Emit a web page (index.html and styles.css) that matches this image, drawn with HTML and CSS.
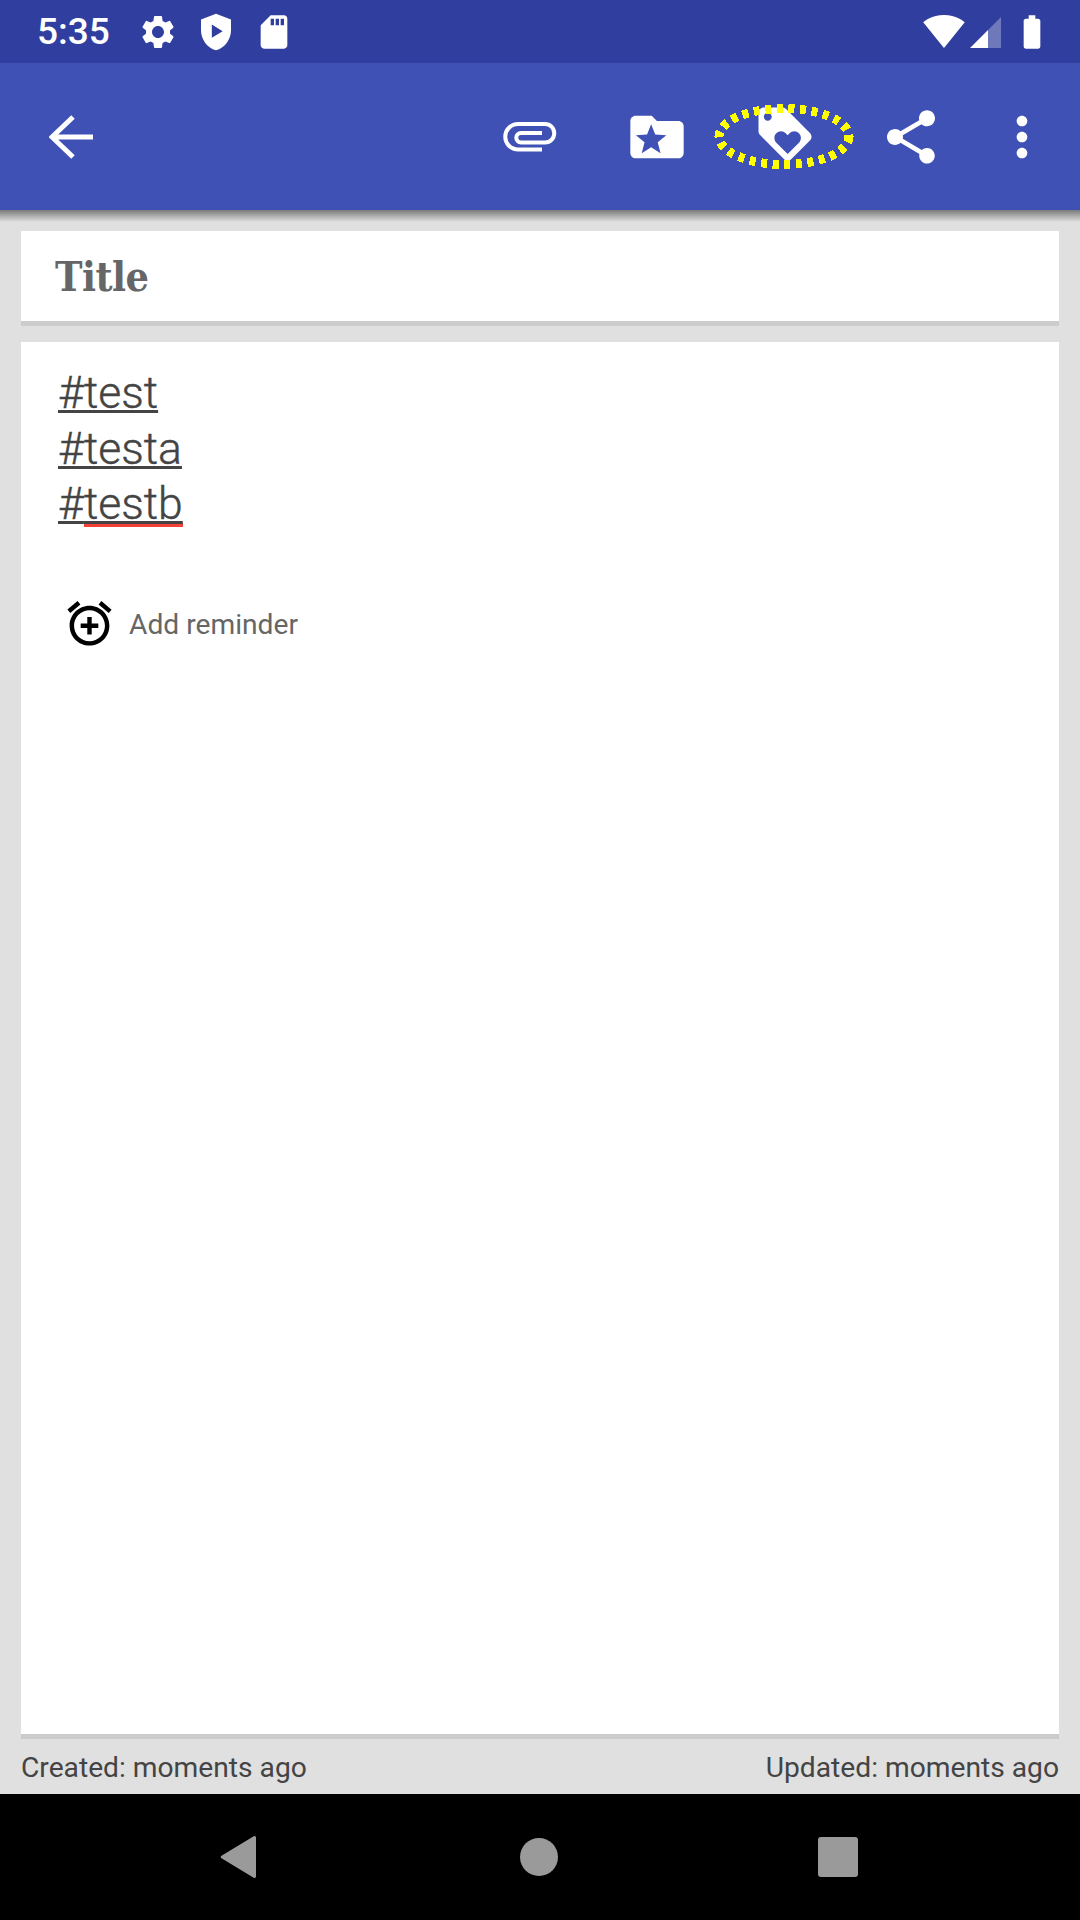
FILE: index.html
```html
<!DOCTYPE html>
<html lang="en">

<head>
    <meta charset="UTF-8">
    <title>Note</title>
    <link rel="stylesheet" href="styles.css">
</head>

<body>
    <div class="status-bar">
        <span class="status-time">5:35</span>
        <svg class="status-icon" viewBox="0 0 24 24"><path d="M19.14 12.94c.04-.3.06-.61.06-.94 0-.32-.02-.64-.07-.94l2.03-1.58c.18-.14.23-.41.12-.61l-1.92-3.32c-.12-.22-.37-.29-.59-.22l-2.39.96c-.5-.38-1.03-.7-1.62-.94l-.36-2.54c-.04-.24-.24-.41-.48-.41h-3.84c-.24 0-.43.17-.47.41l-.36 2.54c-.59.24-1.13.57-1.62.94l-2.39-.96c-.22-.08-.47 0-.59.22L2.74 8.87c-.12.21-.08.47.12.61l2.03 1.58c-.05.3-.09.63-.09.94s.02.64.07.94l-2.03 1.58c-.18.14-.23.41-.12.61l1.92 3.32c.12.22.37.29.59.22l2.39-.96c.5.38 1.03.7 1.62.94l.36 2.54c.05.24.24.41.48.41h3.84c.24 0 .44-.17.47-.41l.36-2.54c.59-.24 1.13-.56 1.62-.94l2.39.96c.22.08.47 0 .59-.22l1.92-3.32c.12-.22.07-.47-.12-.61l-2.01-1.58zM12 15.6c-1.98 0-3.6-1.62-3.6-3.6s1.62-3.6 3.6-3.6 3.6 1.62 3.6 3.6-1.62 3.6-3.6 3.6z"/></svg>
        <svg class="status-icon" viewBox="0 0 24 24"><path fill-rule="evenodd" d="M12 1L3 4.5v6.5c0 5.55 3.84 10.74 9 12 5.16-1.26 9-6.45 9-12V4.500zM9.500 7.500v8l6.500-4z"/></svg>
        <svg class="status-icon" viewBox="0 0 24 24"><path d="M18 2h-8L4.020 8 4 20c0 1.100.9 2 2 2h12c1.100 0 2-.9 2-2V4c0-1.100-.9-2-2-2zm-6 6h-2V4h2v4zm3 0h-2V4h2v4zm3 0h-2V4h2v4z"/></svg>

        <div class="status-right">
            <svg class="wifi-icon" viewBox="0.36 3 23.3 18.500"><path d="M12.010 21.490L23.640 7c-.45-.34-4.930-4-11.640-4C5.280 3 .81 6.660.36 7l11.630 14.490.01.01.01-.01z"/></svg>
            <svg class="signal-icon" viewBox="0 0 31 31"><path d="M0 31L18 13V31z"/><path class="signal-empty" d="M18 13L31 0V31H18z"/></svg>
            <svg class="status-icon battery-icon" viewBox="0 0 24 24"><path d="M15.670 4H14V2h-4v2H8.330C7.600 4 7 4.600 7 5.330v15.330C7 21.400 7.600 22 8.330 22h7.330c.74 0 1.340-.6 1.340-1.330V5.330C17 4.600 16.400 4 15.670 4z"/></svg>
        </div>
    </div>

    <div class="toolbar">
        <button type="button" class="back-btn">
            <svg class="back-icon" viewBox="0 0 44 44"><path d="M24 2L3 22l21 20M3 22h41"/></svg>
        </button>
        <div class="toolbar-spacer"></div>
        <button type="button" class="tool-btn">
            <svg class="clip-icon" viewBox="0 0 54 30"><path d="M39 27.500H15A12.750 12.750 0 0 1 15 2H42A9.250 9.250 0 0 1 42 20.500H18A4.750 4.750 0 0 1 18 11H39"/></svg>
        </button>
        <button type="button" class="tool-btn">
            <svg class="tool-icon" viewBox="0 0 24 24"><path fill-rule="evenodd" d="M20 6h-8l-2-2H4c-1.110 0-1.990.89-1.990 2L2 18c0 1.110.89 2 2 2h16c1.110 0 2-.89 2-2V8c0-1.110-.89-2-2-2zM9.800 7.200l1.530 3.900 4.180.25-3.240 2.650 1.060 4.050-3.530-2.250-3.530 2.250 1.060-4.050-3.240-2.650 4.180-.25z"/></svg>
        </button>
        <button type="button" class="tool-btn">
            <svg class="tag-icon" viewBox="0 0 140 70">
                <path transform="translate(39.200 0.200) scale(2.650)" d="M21.410 11.580l-9-9C12.050 2.220 11.550 2 11 2H4c-1.100 0-2 .9-2 2v7c0 .55.22 1.050.59 1.420l9 9c.36.36.86.58 1.410.58.55 0 1.050-.22 1.410-.59l7-7c.37-.36.59-.86.59-1.410 0-.55-.23-1.060-.59-1.420zM5.500 7C4.670 7 4 6.330 4 5.500S4.670 4 5.500 4 7 4.670 7 5.500 6.330 7 5.500 7zm11.770 8.270L13 19.540l-4.270-4.270C8.280 14.810 8 14.190 8 13.500c0-1.380 1.120-2.500 2.500-2.500.69 0 1.320.28 1.770.74l.73.72.73-.73c.45-.45 1.080-.73 1.770-.73 1.380 0 2.500 1.120 2.500 2.500 0 .69-.28 1.320-.73 1.770z"/>
                <ellipse class="tag-ring" cx="70" cy="34.500" rx="65" ry="28"/>
            </svg>
        </button>
        <button type="button" class="tool-btn">
            <svg class="tool-icon" viewBox="0 0 24 24"><path d="M18 16.080c-.76 0-1.440.3-1.960.77L8.910 12.700c.05-.23.09-.46.09-.7s-.04-.47-.09-.7l7.050-4.110c.54.5 1.250.81 2.040.81 1.660 0 3-1.340 3-3s-1.340-3-3-3-3 1.340-3 3c0 .24.04.47.09.7L8.040 9.810C7.500 9.310 6.790 9 6 9c-1.660 0-3 1.340-3 3s1.340 3 3 3c.79 0 1.500-.31 2.040-.81l7.120 4.160c-.05.21-.08.43-.08.65 0 1.610 1.310 2.920 2.920 2.920 1.610 0 2.920-1.310 2.920-2.920s-1.310-2.920-2.920-2.920z"/></svg>
        </button>
        <button type="button" class="more-btn">
            <svg class="tool-icon" viewBox="0 0 24 24"><path d="M12 8c1.100 0 2-.9 2-2s-.9-2-2-2-2 .9-2 2 .9 2 2 2zm0 2c-1.100 0-2 .9-2 2s.9 2 2 2 2-.9 2-2-.9-2-2-2zm0 6c-1.100 0-2 .9-2 2s.9 2 2 2 2-.9 2-2-.9-2-2-2z"/></svg>
        </button>
    </div>
    <div class="toolbar-shadow"></div>

    <div class="content">
        <div class="title-card">Title</div>

        <div class="note-card">
            <div class="note-text">
                <div><span class="hashtag">#test</span></div>
                <div><span class="hashtag">#testa</span></div>
                <div><span class="hashtag">#<span class="misspelled">testb</span></span></div>
            </div>
            <div class="reminder">
                <svg class="reminder-icon" viewBox="0 0 24 24"><path d="M7.880 3.390L6.600 1.860 2 5.710l1.290 1.530 4.590-3.850zM22 5.720l-4.600-3.860-1.290 1.530 4.600 3.860L22 5.720zM11.990 4C7.020 4 3 8.030 3 13s4.020 9 8.990 9C16.970 22 21 17.970 21 13s-4.030-9-9.010-9zM12 20c-3.870 0-7-3.130-7-7s3.130-7 7-7 7 3.130 7 7-3.130 7-7 7zm1-11h-2v3H8v2h3v3h2v-3h3v-2h-3V9z"/></svg>
                <span class="reminder-label">Add reminder</span>
            </div>
        </div>

        <div class="dates">
            <span>Created: moments ago</span>
            <span>Updated: moments ago</span>
        </div>
    </div>

    <div class="nav-bar">
        <svg class="nav-back" viewBox="0 0 38 44"><path d="M36 2.500v39a1.500 1.500 0 0 1-2.300 1.300L1.500 23.300a1.500 1.500 0 0 1 0-2.600L33.700 1.200A1.500 1.500 0 0 1 36 2.500z"/></svg>
        <div class="nav-home"></div>
        <div class="nav-recent"></div>
    </div>
</body>

</html>
```

FILE: styles.css
```css
* {
    box-sizing: border-box;
}

body {
    margin: 0;
    width: 1080px;
    height: 1920px;
    display: flex;
    flex-direction: column;
    background: #e0e0e0;
    font-family: Roboto, "Noto Sans", sans-serif;
}

button {
    padding: 0;
    border: 0;
    background: none;
    display: flex;
    align-items: center;
    justify-content: center;
}

/* status bar */
.status-bar {
    height: 63px;
    flex: none;
    display: flex;
    align-items: center;
    padding: 0 28px 0 37px;
    background: #303f9f;
    color: #fff;
}

.status-bar svg {
    fill: #fff;
    flex: none;
}

.status-time {
    font-size: 37px;
    font-weight: 500;
    margin-right: 28px;
}

.status-icon {
    width: 40px;
    height: 40px;
    margin-right: 18px;
}

.status-right {
    margin-left: auto;
    display: flex;
    align-items: center;
}

.wifi-icon {
    width: 42px;
    height: 33px;
    margin-right: 5px;
}

.signal-icon {
    width: 31px;
    height: 31px;
    margin: 1px 11px 0 0;
}

.signal-empty {
    opacity: 0.3;
}

.battery-icon {
    margin-right: 0;
}

/* toolbar */
.toolbar {
    height: 147px;
    flex: none;
    display: flex;
    align-items: center;
    padding-right: 10px;
    background: #3f51b5;
}

.toolbar-spacer {
    flex: 1;
}

.back-btn {
    width: 142px;
    height: 100%;
}

.tool-btn {
    width: 127px;
    height: 100%;
}

.more-btn {
    width: 96px;
    height: 100%;
}

.back-icon {
    width: 44px;
    height: 44px;
    fill: none;
    stroke: #fff;
    stroke-width: 5;
}

.clip-icon {
    width: 54px;
    height: 30px;
    fill: none;
    stroke: #fff;
    stroke-width: 4;
}

.tool-icon {
    width: 64px;
    height: 64px;
    fill: #fff;
}

.tag-icon {
    width: 140px;
    height: 70px;
    overflow: visible;
    fill: #fff;
}

.tag-ring {
    fill: none;
    stroke: #ff0;
    stroke-width: 9;
    stroke-dasharray: 6 5.600;
    shape-rendering: crispEdges;
}

.toolbar-shadow {
    height: 12px;
    flex: none;
    background: linear-gradient(#7a7a7a, #e0e0e0);
}

/* note */
.content {
    flex: 1;
    display: flex;
    flex-direction: column;
    padding: 9px 21px 0;
}

.title-card {
    height: 95px;
    flex: none;
    padding-left: 34px;
    border-bottom: 5px solid #ccc;
    background: #fff;
    color: #666;
    font-family: "DejaVu Serif Condensed", "DejaVu Serif", serif;
    font-size: 41px;
    font-weight: 700;
    letter-spacing: -0.500px;
    line-height: 92px;
}

.note-card {
    flex: 1;
    margin-top: 16px;
    padding: 24px 37px 0;
    border-bottom: 5px solid #ccc;
    background: #fff;
}

.note-text {
    font-size: 44.500px;
    font-weight: 300;
    line-height: 55.500px;
    color: #444;
    -webkit-text-stroke: 0.4px #444;
}

.hashtag {
    text-decoration: underline;
    text-decoration-thickness: 3px;
}

.misspelled {
    background: linear-gradient(#f44336, #f44336) no-repeat 0 calc(100% - 3px) / 100% 4px;
}

.reminder {
    display: flex;
    align-items: center;
    margin: 64px 0 0 5px;
    font-size: 28.200px;
    color: #666;
}

.reminder-label {
    padding-top: 2px;
}

.reminder-icon {
    width: 53px;
    height: 53px;
    margin-right: 13px;
    fill: #000;
}

.dates {
    height: 55px;
    flex: none;
    display: flex;
    align-items: center;
    justify-content: space-between;
    padding-top: 2px;
    font-size: 28.200px;
    color: #444;
}

/* nav bar */
.nav-bar {
    height: 126px;
    flex: none;
    display: flex;
    align-items: center;
    padding-left: 220px;
    background: #000;
}

.nav-back {
    width: 38px;
    height: 44px;
    fill: #9a9a9a;
}

.nav-home {
    width: 38px;
    height: 38px;
    margin-left: 262px;
    border-radius: 50%;
    background: #9a9a9a;
}

.nav-recent {
    width: 40px;
    height: 40px;
    margin-left: 260px;
    border-radius: 3px;
    background: #9a9a9a;
}
```
